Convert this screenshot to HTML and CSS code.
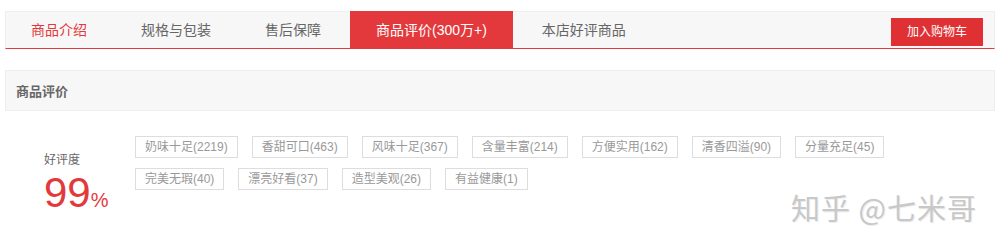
FILE: index.html
```html
<!DOCTYPE html>
<html lang="zh">
<head>
<meta charset="utf-8">
<link rel="stylesheet" href="styles.css">
</head>
<body>
<div class="page">
  <div class="tabs">
    <a class="tab tab-first">商品介绍</a>
    <a class="tab">规格与包装</a>
    <a class="tab">售后保障</a>
    <a class="tab tab-active">商品评价(300万+)</a>
    <a class="tab">本店好评商品</a>
    <a class="cart-btn">加入购物车</a>
  </div>

  <div class="section-head">商品评价</div>

  <div class="rate">
    <div class="rate-left">
      <div class="rate-label">好评度</div>
      <div class="rate-value">99<span class="pct">%</span></div>
    </div>
    <div class="tags">
      <div class="tag-row">
        <span class="tag">奶味十足(2219)</span>
        <span class="tag">香甜可口(463)</span>
        <span class="tag">风味十足(367)</span>
        <span class="tag">含量丰富(214)</span>
        <span class="tag">方便实用(162)</span>
        <span class="tag">清香四溢(90)</span>
        <span class="tag">分量充足(45)</span>
      </div>
      <div class="tag-row">
        <span class="tag">完美无瑕(40)</span>
        <span class="tag">漂亮好看(37)</span>
        <span class="tag">造型美观(26)</span>
        <span class="tag">有益健康(1)</span>
      </div>
    </div>
  </div>

  <div class="watermark">知乎 @七米哥</div>
</div>
</body>
</html>
```

FILE: styles.css
```css
* { box-sizing: border-box; }
html, body {
  margin: 0;
  padding: 0;
  background: #fff;
}
body {
  font-family: "Liberation Sans", "Noto Sans CJK SC", sans-serif;
  color: #666;
  width: 1008px;
  height: 247px;
  overflow: hidden;
}
.page {
  position: relative;
  padding: 11px 13px 0 5px;
  height: 247px;
}
.tabs {
  display: flex;
  align-items: stretch;
  gap: 4px;
  height: 38px;
  background: #f7f7f7;
  border: 1px solid #eee;
  border-bottom: 1px solid #e4393c;
}
.tab {
  display: flex;
  align-items: center;
  padding: 0 25px;
  font-size: 14px;
  color: #666;
  white-space: nowrap;
  line-height: 1;
}
.tab-first {
  color: #e4393c;
}
.tab-active {
  background: #e4393c;
  color: #fff;
  margin-top: -1px;
  padding: 0 26px;
}
.cart-btn {
  margin: 6px 11px 2px auto;
  width: 92px;
  background: #df3033;
  color: #fff;
  font-size: 12px;
  display: flex;
  align-items: center;
  justify-content: center;
  line-height: 1;
}
.section-head {
  margin-top: 21px;
  height: 41px;
  background: #f7f7f7;
  border: 1px solid #eee;
  padding-left: 10px;
  display: flex;
  align-items: center;
  font-size: 13px;
  font-weight: bold;
  color: #666;
}
.rate {
  display: flex;
  padding-top: 25px;
}
.rate-left {
  width: 130px;
  padding-left: 39px;
  padding-top: 16px;
}
.rate-label {
  font-size: 12px;
  color: #666;
  line-height: 16px;
}
.rate-value {
  font-family: "Liberation Sans", Arial, sans-serif;
  font-size: 42px;
  color: #e4393c;
  line-height: 40px;
  margin-top: 5px;
  white-space: nowrap;
}
.pct {
  font-size: 20px;
}
.tags {
  display: flex;
  flex-direction: column;
  gap: 10px;
}
.tag-row {
  display: flex;
  gap: 14px;
}
.tag {
  display: inline-flex;
  align-items: center;
  height: 22px;
  padding: 0 9px;
  border: 1px solid #ddd;
  font-size: 12px;
  color: #999;
  white-space: nowrap;
  line-height: 1;
}
.watermark {
  position: absolute;
  left: 791px;
  top: 189px;
  font-family: "Noto Sans CJK SC", sans-serif;
  font-size: 29px;
  color: #c8c8c8;
  letter-spacing: 1px;
  text-shadow: 1px 1px 0 #eee;
  white-space: nowrap;
  line-height: 36px;
}
```
